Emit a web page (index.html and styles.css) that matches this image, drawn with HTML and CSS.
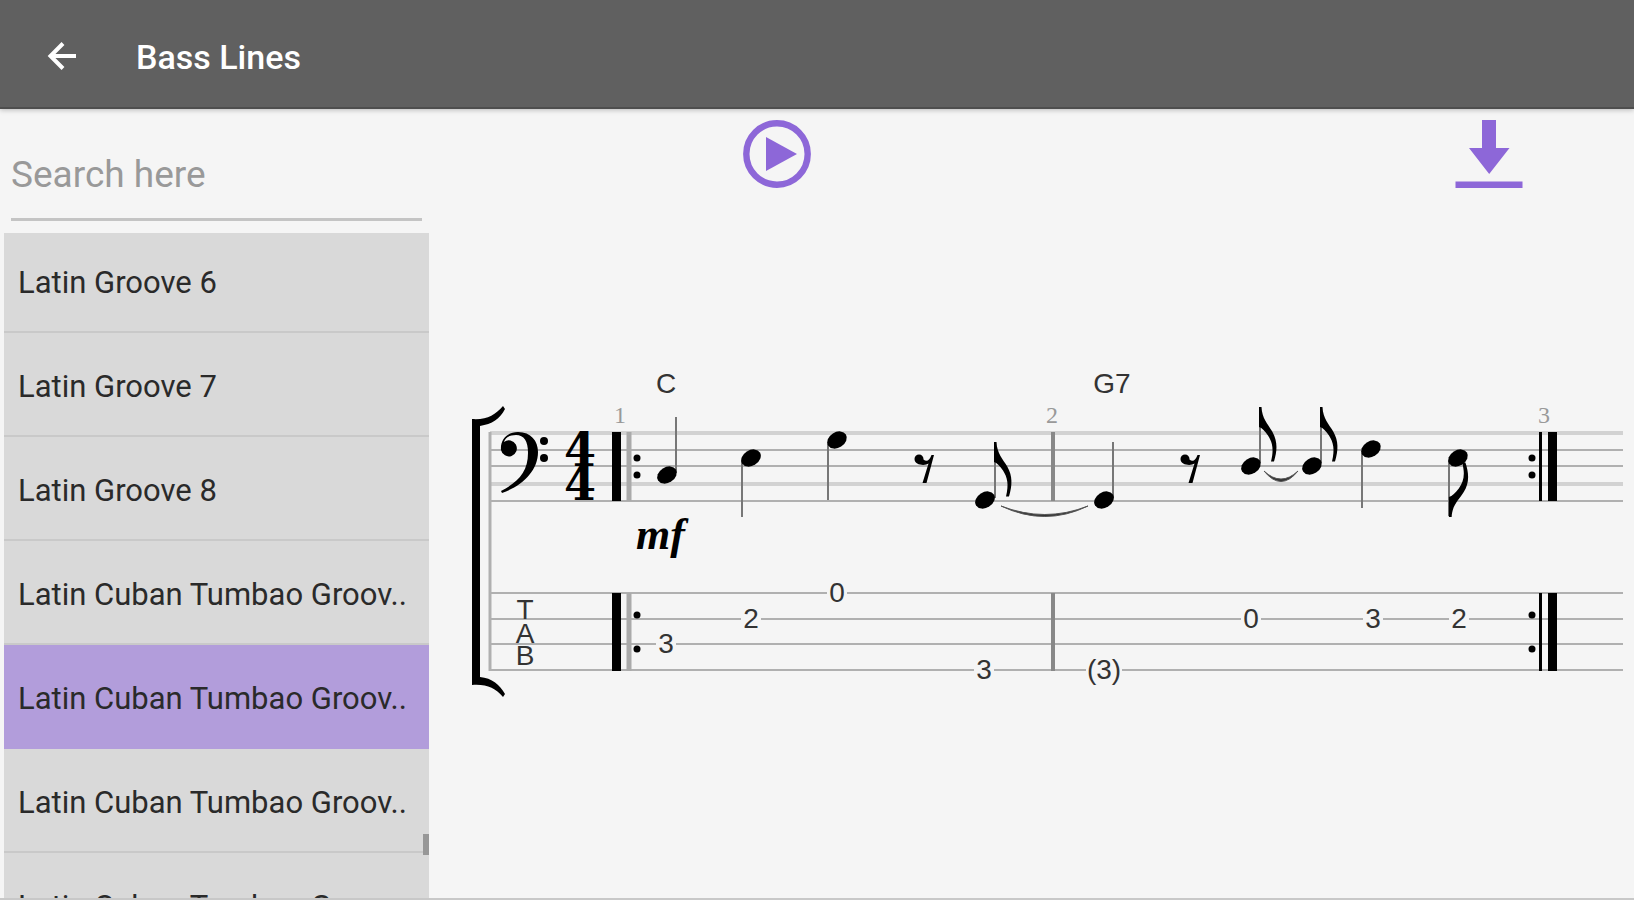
FILE: index.html
```html
<!DOCTYPE html>
<html lang="en">
<head>
  <meta charset="UTF-8">
  <meta name="viewport" content="width=device-width, initial-scale=1.0">
  <title>Bass Lines</title>
  <link rel="stylesheet" href="styles.css">
</head>
<body>
  <header class="app-bar">
    <a href="#" class="back" aria-label="Back">
      <svg viewBox="0 0 32 32" width="32" height="32"><path d="M30 15H5M17 2.500L4.500 15l12.500 12.500" fill="none" stroke="#fff" stroke-width="4"/></svg>
    </a>
    <h1>Bass Lines</h1>
  </header>

  <div class="content">
    <aside class="sidebar">
      <input type="search" class="search" placeholder="Search here" aria-label="Search here">
      <div class="list-wrap">
        <ul class="list">
          <li><button type="button">Latin Groove 6</button></li>
          <li><button type="button">Latin Groove 7</button></li>
          <li><button type="button">Latin Groove 8</button></li>
          <li><button type="button">Latin Cuban Tumbao Groov..</button></li>
          <li><button type="button" class="selected">Latin Cuban Tumbao Groov..</button></li>
          <li><button type="button">Latin Cuban Tumbao Groov..</button></li>
          <li><button type="button">Latin Cuban Tumbao Groov..</button></li>
        </ul>
        <span class="thumb"></span>
      </div>
    </aside>

    <main class="player">
      <div class="toolbar">
        <button type="button" class="icon-btn" aria-label="Play">
          <svg viewBox="0 0 68 68" width="68" height="68"><circle cx="34" cy="34" r="30.7" fill="none" stroke="#8d67d8" stroke-width="6.4"/><path d="M23 17v34l31-17z" fill="#8d67d8"/></svg>
        </button>
        <button type="button" class="icon-btn" aria-label="Download">
          <svg viewBox="0 0 68 68" width="68" height="68"><path d="M27 0h14v28h13.500L34.200 54 14 28h13zM0.500 61.500h67v6.500h-67z" fill="#8d67d8"/></svg>
        </button>
      </div>

      <svg class="score" viewBox="434 360 1200 350" role="img" aria-label="Bass line score with tablature">
        <defs>
          <ellipse id="head" rx="10.500" ry="7.800" transform="rotate(-32)"/>
          <path id="rest" d="M0-4.500a4.500 4.500 0 0 1 4.500 5C8 3.500 10.500 1 12.500-4h2.500L7.500 24H3.500L9.500 4.500C6.500 7-4.500 6.500-4.500 0A4.500 4.500 0 0 1 0-4.500z"/>
          <path id="flag" d="M-1 0h2.500C2 12 8 17 12.500 25c5 9 5 18 1.500 29.500h-3c3-12 1.500-19-3-26C5 24 2 21-1 20z"/>
        </defs>

        <!-- staff and tab lines -->
        <g class="line-soft">
          <path d="M490 432H1623M490 483H1623"/>
        </g>
        <g class="line">
          <path d="M490 449H1623M490 465H1623M490 500H1623"/>
          <path d="M490 592H1623M490 618H1623M490 643H1623M490 669H1623"/>
        </g>
        <path class="edge" d="M490 431V670"/>

        <!-- system bracket -->
        <path d="M472 418C487 419 495 414 503 405L505 408C500 418 492 423 480 425V676C492 677 500 684 505 693L503 696C495 687 487 683 472 684z"/>

        <!-- bass clef -->
        <path d="M501 449C500 438 508 431 518 431C531 431 538 440 538 451C538 470 522 485 502 492L501 490C518 481 528 471 528 452C528 440 524 434 516 434C509 434 505 437 504 441A8 8 0 1 1 501 449z"/>
        <circle cx="544" cy="440" r="4"/>
        <circle cx="544" cy="457" r="4"/>

        <text class="time" x="580" y="465">4</text>
        <text class="time" x="580" y="499">4</text>

        <!-- opening repeat -->
        <path d="M612 431h9v69h-9zM612 592h9v78h-9z"/>
        <path class="edge-wide" d="M629 431V500M629 592V670"/>
        <g>
          <circle cx="637" cy="457" r="3.500"/><circle cx="637" cy="474" r="3.500"/>
          <circle cx="637" cy="614" r="3.500"/><circle cx="637" cy="648" r="3.500"/>
        </g>

        <!-- bar 1 -->
        <path class="stem" d="M676 416V472M742 460V516M828 443V499M995 441V497"/>
        <use href="#head" x="667" y="474"/>
        <use href="#head" x="751" y="457"/>
        <use href="#head" x="837" y="439"/>
        <use href="#rest" x="919" y="458"/>
        <use href="#head" x="985" y="499"/>
        <use href="#flag" x="995" y="441"/>
        <path class="tie" d="M1001 505Q1045 526 1088 505Q1045 522 1001 505z"/>
        <path class="bar" d="M1053 431V500M1053 592V670"/>

        <!-- bar 2 -->
        <path class="stem" d="M1113 441V497M1260 406V462M1321 406V462M1362 452V507M1449 460V515"/>
        <use href="#head" x="1104" y="499"/>
        <use href="#rest" x="1185" y="458"/>
        <use href="#head" x="1251" y="465"/>
        <use href="#flag" x="1260" y="406"/>
        <path class="tie" d="M1264 470Q1281 491 1298 470Q1281 486 1264 470z"/>
        <use href="#head" x="1312" y="465"/>
        <use href="#flag" x="1321" y="406"/>
        <use href="#head" x="1371" y="448"/>
        <use href="#head" x="1458" y="457"/>
        <use href="#flag" transform="translate(1450 516) scale(1.100 -1)"/>

        <!-- closing repeat -->
        <path d="M1548 431h9v69h-9zM1548 592h9v78h-9zM1539 431h3v69h-3zM1539 592h3v78h-3z"/>
        <g>
          <circle cx="1532" cy="457" r="3.500"/><circle cx="1532" cy="474" r="3.500"/>
          <circle cx="1532" cy="614" r="3.500"/><circle cx="1532" cy="648" r="3.500"/>
        </g>

        <g class="number">
          <text x="620" y="422">1</text>
          <text x="1052" y="422">2</text>
          <text x="1544" y="422">3</text>
        </g>
        <g class="chord">
          <text x="666" y="392">C</text>
          <text x="1112" y="392">G7</text>
        </g>
        <text class="dynamic" x="636" y="548">mf</text>

        <g class="tab-clef">
          <text x="525" y="618">T</text>
          <text x="525" y="642">A</text>
          <text x="525" y="664">B</text>
        </g>

        <!-- gaps in the tab lines behind the fret numbers -->
        <path class="gap" d="M656 640h20v6h-20zM741 615h20v6h-20zM827 589h20v6h-20zM974 666h20v6h-20zM1086 666h36v6h-36zM1241 615h20v6h-20zM1363 615h20v6h-20zM1449 615h20v6h-20z"/>
        <g class="fret">
          <text x="666" y="652">3</text>
          <text x="751" y="627">2</text>
          <text x="837" y="601">0</text>
          <text x="984" y="678">3</text>
          <text x="1104" y="678">(3)</text>
          <text x="1251" y="627">0</text>
          <text x="1373" y="627">3</text>
          <text x="1459" y="627">2</text>
        </g>
      </svg>
    </main>
  </div>
</body>
</html>
```
FILE: styles.css
```css
* {
  box-sizing: border-box;
}

body {
  margin: 0;
  height: 100vh;
  display: flex;
  flex-direction: column;
  overflow: hidden;
  background-color: #f5f5f5;
  border-bottom: 2px solid #c8c8c8;
  font-family: Roboto, "Liberation Sans", sans-serif;
}

button {
  font-family: inherit;
  border: 0;
  cursor: pointer;
}

.app-bar {
  display: flex;
  align-items: center;
  gap: 58px;
  height: 109px;
  flex-shrink: 0;
  padding: 6px 46px 0;
  background-color: #606060;
  border-bottom: 2px solid #4e4e4e;
  box-shadow: 0 1px 5px rgba(0, 0, 0, 0.25);
  color: white;
}

.back {
  display: flex;
}

.app-bar h1 {
  margin: 0;
  font-size: 34px;
  font-weight: 500;
}

.content {
  flex: 1;
  display: flex;
  min-height: 0;
}

.sidebar {
  width: 434px;
  flex-shrink: 0;
  display: flex;
  flex-direction: column;
  padding: 20px 5px 0 4px;
}

.search {
  height: 92px;
  flex-shrink: 0;
  margin: 0 7px 12px;
  padding: 2px 0 0;
  border: 0;
  border-bottom: 3px solid #c4c4c4;
  background: transparent;
  font-family: inherit;
  font-size: 37px;
  outline: none;
}

.search::placeholder {
  color: #999;
}

.list-wrap {
  position: relative;
  flex: 1;
  min-height: 0;
  overflow: hidden;
}

.list {
  list-style: none;
  margin: -4px 0 0;
  padding: 0;
}

.list button {
  display: block;
  width: 100%;
  height: 104px;
  padding: 4px 14px 0;
  border-bottom: 2px solid #c9c9c9;
  background-color: #d9d9d9;
  color: #2a2a2a;
  font-size: 31px;
  text-align: left;
  white-space: nowrap;
  overflow: hidden;
  text-overflow: ellipsis;
}

.list button.selected {
  background-color: #b29ddb;
  border-bottom-color: #b29ddb;
}

.thumb {
  position: absolute;
  right: 0;
  bottom: 43px;
  width: 6px;
  height: 21px;
  background-color: #979797;
}

.player {
  flex: 1;
  min-width: 0;
}

.toolbar {
  display: flex;
  justify-content: space-between;
  padding: 11px 111px 0 309px;
}

.icon-btn {
  display: flex;
  padding: 0;
  background: none;
}

.score {
  display: block;
  width: 100%;
  margin-top: 173px;
}

.line,
.line-soft,
.edge,
.edge-wide,
.stem,
.bar {
  fill: none;
  stroke-width: 2;
}

.line {
  stroke: #b0b0b0;
}

.line-soft {
  stroke: #d2d2d2;
  stroke-width: 4;
}

.edge {
  stroke: #b0b0b0;
  stroke-width: 3;
}

.edge-wide {
  stroke: #aaa;
  stroke-width: 5;
}

.stem {
  stroke: #777;
}

.bar {
  stroke: #888;
  stroke-width: 4;
}

.tie {
  fill: #333;
  stroke: #555;
}

.gap {
  fill: #f5f5f5;
}

.score text {
  text-anchor: middle;
}

.time {
  font-family: "DejaVu Serif", serif;
  font-size: 46px;
  font-weight: bold;
}

.number {
  font-family: "Liberation Serif", serif;
  font-size: 24px;
  fill: #999;
}

.chord,
.fret,
.tab-clef {
  font-family: "Liberation Sans", sans-serif;
  font-size: 28px;
  fill: #333;
}

.score .dynamic {
  font-family: "Liberation Serif", serif;
  font-size: 44px;
  font-weight: bold;
  font-style: italic;
  text-anchor: start;
}
```
